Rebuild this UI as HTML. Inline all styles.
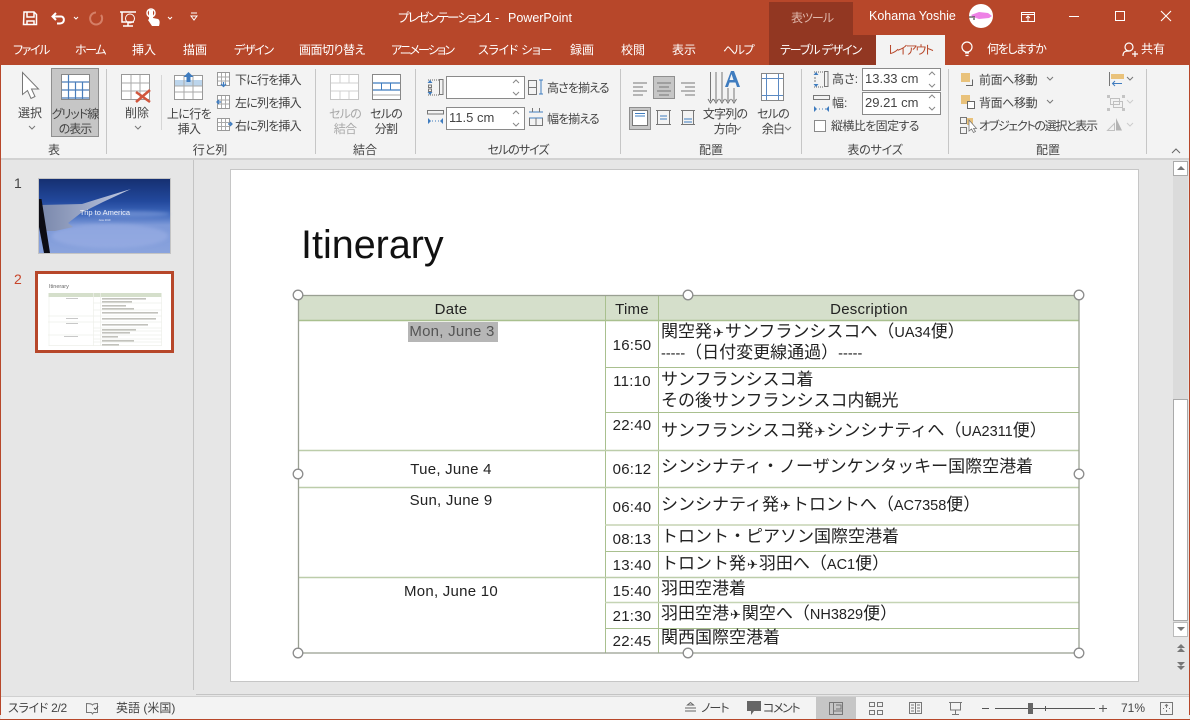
<!DOCTYPE html>
<html lang="ja"><head><meta charset="utf-8"><title>PowerPoint</title>
<style>
*{box-sizing:border-box}
html,body{margin:0;padding:0;background:#fff}
#a{position:relative;width:1190px;height:720px;overflow:hidden;background:#e6e6e6;font-family:"Liberation Sans","Noto Sans CJK JP",sans-serif;font-feature-settings:"palt";color:#333}
#a div{position:absolute}
.t,.c{white-space:nowrap;font-size:12px;line-height:20px;height:20px;color:#444}
.c{transform:translateX(-50%);text-align:center}
.m{line-height:15px;height:32px}
.w{color:#fff}
.g{color:#a8a8a8}
.box{background:#fff;border:1px solid #8a8a8a}
.sep{width:1px;top:69px;height:85px;background:#c6c6c6}
.lt{font-size:15px;letter-spacing:.25px;color:#222;margin-top:2px}
.d{left:661px;font-size:17px;color:#222;font-feature-settings:normal;white-space:nowrap;line-height:20px;height:20px;margin-top:1px}
.d i{font-style:normal;font-size:14.5px;font-family:"Liberation Sans",sans-serif}
.d b{font-weight:normal;font-size:13px;font-family:"DejaVu Sans",sans-serif;margin:0 1px}
svg{position:absolute;left:0;top:0}
</style></head><body><div id="a">
<div style="left:0;top:0;width:1190px;height:65px;background:#b7472a"></div>
<div style="left:769px;top:2px;width:84px;height:33px;background:#923722"></div>
<div style="left:769px;top:35px;width:107px;height:30px;background:#923722"></div>
<div style="left:876px;top:35px;width:69px;height:30px;background:#f3f3f3"></div>
<div style="left:1px;top:65px;width:1188px;height:93px;background:#f3f3f3"></div>
<div style="left:1px;top:158px;width:1188px;height:2px;background:#d2d2d2"></div>
<div style="left:193px;top:160px;width:1px;height:530px;background:#c4c4c4"></div>
<div style="left:196px;top:694px;width:993px;height:1px;background:#c4c4c4"></div>
<div style="left:1px;top:697px;width:1188px;height:22px;background:#f3f3f3"></div>
<div style="left:1px;top:696px;width:1188px;height:1px;background:#d0d0d0"></div>
<div style="left:0;top:60px;width:1px;height:655px;background:#b7472a"></div>
<div style="left:1189px;top:60px;width:1px;height:655px;background:#b7472a"></div>
<div style="left:0;top:719px;width:1190px;height:1px;background:#b7472a"></div>

<!-- title -->
<div class="t w" style="left:398px;top:8px;font-size:12.5px;letter-spacing:-1.6px">プレゼンテーション1</div>
<div class="t w" style="left:495px;top:8px;font-size:12.5px">-</div>
<div class="t w" style="left:508px;top:8px;font-size:12.5px">PowerPoint</div>
<div class="c" style="left:812px;top:8px;color:#e0b8ac;letter-spacing:-1px">表ツール</div>
<div class="t w" style="left:869px;top:6px;font-size:12.5px">Kohama Yoshie</div>

<!-- tabs -->
<div class="t w" style="left:13px;top:40px;letter-spacing:-1.4px">ファイル</div>
<div class="t w" style="left:75px;top:40px;letter-spacing:-1.4px">ホーム</div>
<div class="t w" style="left:132px;top:40px">挿入</div>
<div class="t w" style="left:183px;top:40px">描画</div>
<div class="t w" style="left:234px;top:40px;letter-spacing:-1.3px">デザイン</div>
<div class="t w" style="left:299px;top:40px;letter-spacing:-.5px">画面切り替え</div>
<div class="t w" style="left:391px;top:40px;letter-spacing:-1.8px">アニメーション</div>
<div class="t w" style="left:478px;top:40px;letter-spacing:-.3px">スライド ショー</div>
<div class="t w" style="left:570px;top:40px">録画</div>
<div class="t w" style="left:621px;top:40px">校閲</div>
<div class="t w" style="left:672px;top:40px">表示</div>
<div class="t w" style="left:723px;top:40px;letter-spacing:-1.4px">ヘルプ</div>
<div class="t w" style="left:780px;top:40px;letter-spacing:-1.1px">テーブル デザイン</div>
<div class="t" style="left:888px;top:40px;color:#b7472a;letter-spacing:-1.6px">レイアウト</div>
<div class="t w" style="left:987px;top:39px;letter-spacing:-1.4px">何をしますか</div>
<div class="t w" style="left:1141px;top:39px">共有</div>

<!-- ribbon separators -->
<div class="sep" style="left:106px"></div><div class="sep" style="left:315px"></div><div class="sep" style="left:415px"></div><div class="sep" style="left:620px"></div><div class="sep" style="left:801px"></div><div class="sep" style="left:948px"></div><div class="sep" style="left:1146px"></div>
<div style="left:161px;top:75px;width:1px;height:55px;background:#d6d6d6"></div>

<!-- active bg -->
<div style="left:51px;top:68px;width:48px;height:69px;background:#c6c6c6;border:1px solid #8f8f8f"></div>
<div style="left:653px;top:76px;width:22px;height:23px;background:#c6c6c6;border:1px solid #8f8f8f"></div>
<div style="left:629px;top:107px;width:22px;height:23px;background:#c6c6c6;border:1px solid #8f8f8f"></div>
<!-- inputs -->
<div class="box" style="left:446px;top:76px;width:79px;height:23px"></div>
<div class="box" style="left:446px;top:107px;width:79px;height:23px"></div>
<div class="box" style="left:862px;top:68px;width:79px;height:23px"></div>
<div class="box" style="left:862px;top:92px;width:79px;height:23px"></div>
<div class="box" style="left:814px;top:120px;width:12px;height:12px"></div>
<div class="t" style="left:449px;top:108px;font-size:13px">11.5 cm</div>
<div class="t" style="left:865px;top:69px;font-size:13px">13.33 cm</div>
<div class="t" style="left:865px;top:93px;font-size:13px">29.21 cm</div>

<!-- ribbon text -->
<div class="c" style="left:30px;top:103px">選択</div>
<div class="c m" style="left:75px;top:107px;letter-spacing:-1px">グリッド線<br>の表示</div>
<div class="c" style="left:54px;top:140px">表</div>
<div class="c" style="left:137px;top:103px">削除</div>
<div class="c m" style="left:189px;top:107px;letter-spacing:-.6px">上に行を<br>挿入</div>
<div class="t" style="left:235px;top:70px;letter-spacing:-.8px">下に行を挿入</div>
<div class="t" style="left:235px;top:93px;letter-spacing:-.8px">左に列を挿入</div>
<div class="t" style="left:235px;top:116px;letter-spacing:-.8px">右に列を挿入</div>
<div class="c" style="left:210px;top:140px">行と列</div>
<div class="c g m" style="left:345px;top:107px;letter-spacing:-.8px">セルの<br>結合</div>
<div class="c m" style="left:386px;top:107px;letter-spacing:-.8px">セルの<br>分割</div>
<div class="c" style="left:365px;top:140px">結合</div>
<div class="t" style="left:547px;top:78px;letter-spacing:-.9px">高さを揃える</div>
<div class="t" style="left:547px;top:109px;letter-spacing:-.9px">幅を揃える</div>
<div class="c" style="left:518px;top:140px;letter-spacing:-1px">セルのサイズ</div>
<div class="c m" style="left:725px;top:107px;letter-spacing:-.8px">文字列の<br>方向</div>
<div class="c m" style="left:773px;top:107px;letter-spacing:-.8px">セルの<br>余白</div>
<div class="c" style="left:711px;top:140px">配置</div>
<div class="t" style="left:832px;top:69px">高さ:</div>
<div class="t" style="left:832px;top:93px">幅:</div>
<div class="t" style="left:831px;top:116px;letter-spacing:-.6px">縦横比を固定する</div>
<div class="c" style="left:875px;top:140px;letter-spacing:-.2px">表のサイズ</div>
<div class="t" style="left:979px;top:70px;letter-spacing:-.4px">前面へ移動</div>
<div class="t" style="left:979px;top:93px;letter-spacing:-.4px">背面へ移動</div>
<div class="t" style="left:979px;top:116px;letter-spacing:-1.3px">オブジェクトの選択と表示</div>
<div class="c" style="left:1048px;top:140px">配置</div>

<!-- slide pane -->
<div class="t" style="left:14px;top:173px;font-size:14px;color:#444">1</div>
<div class="t" style="left:14px;top:269px;font-size:14px;color:#c8452a">2</div>
<div style="left:230px;top:169px;width:909px;height:513px;background:#fff;border:1px solid #c6c6c6"></div>
<div style="left:1173px;top:161px;width:15px;height:475px;background:#dbdbdb"></div>
<div style="left:1173px;top:161px;width:15px;height:15px;background:#fff;border:1px solid #aaa"></div>
<div style="left:1173px;top:399px;width:15px;height:222px;background:#fff;border:1px solid #aaa"></div>
<div style="left:1173px;top:622px;width:15px;height:15px;background:#fff;border:1px solid #bbb"></div>

<!-- slide -->
<div class="t" style="left:301px;top:220px;height:50px;line-height:50px;font-size:39.500px;color:#111;font-feature-settings:normal">Itinerary</div>
<div style="left:298px;top:295px;width:781px;height:25px;background:#d5dfcb"></div>
<div style="left:408px;top:322px;width:90px;height:20px;background:#b6b6b6"></div>

<!-- icons and table lines -->
<svg width="1190" height="720" viewBox="0 0 1190 720" fill="none">
<defs><linearGradient id="sky" x1="0" y1="0" x2="0" y2="1"><stop offset="0" stop-color="#152f70"/><stop offset=".3" stop-color="#22489c"/><stop offset=".48" stop-color="#3f69bd"/><stop offset=".62" stop-color="#7d99d8"/><stop offset="1" stop-color="#8aa3dd"/></linearGradient>
<linearGradient id="wing" x1="0" y1="0" x2="1" y2="0"><stop offset="0" stop-color="#7a88ac"/><stop offset="1" stop-color="#bfc9e2"/></linearGradient>
<filter id="bl"><feGaussianBlur stdDeviation="1.500"/></filter></defs>
<!-- qat -->
<g stroke="#fff" stroke-width="1.5">
<path d="M24 12h10l2.500 2.500v10h-13z"/><path d="M27 12v5h7v-5M27 25v-4h7v4" stroke-width="1.500"/>
<path d="M56 13l-3.500 3.500 3.500 3.500M53 16.500h8c4 0 4 7 -1 7h-3" stroke-width="2"/>
<path d="M74 17l2 2 2-2M168 17l2 2 2-2" stroke-width="1"/>
<path d="M120 12h16M122 12v10h12M128 22v4M123 26h10"/>
<circle cx="130" cy="18.500" r="4.500" stroke-width="1"/>
<path d="M191 13h6M191 16h6l-3 4z" stroke-width="1"/>
</g>
<path d="M96 12.500a6 6 0 1 0 5 2.500" stroke="#d57f67" stroke-width="2"/>
<path d="M149 10h4v8l5 1c2 1 2 4 1 7h-7l-4-6 1-1z" fill="#fff"/>
<circle cx="151" cy="13" r="4" stroke="#fff" stroke-width="1.500"/>
<!-- avatar -->
<circle cx="981" cy="16" r="12" fill="#fff"/>
<path d="M971 15l8-3 9 1 4 3-3 2-10 1-6-2z" fill="#ee82e6"/>
<path d="M969 17h6M973 19h2" stroke="#222"/>
<!-- window -->
<g stroke="#fff">
<path d="M1021.500 12.500h13v9h-13zM1021.500 14.500h13M1028 21v-5M1026 18l2-2 2 2"/>
<path d="M1069 16.500h10"/><rect x="1115.500" y="11.500" width="9" height="9"/>
<path d="M1161 11l10 10M1171 11l-10 10" stroke-width="1.100"/>
<circle cx="967" cy="47" r="5" stroke-width="1.200"/>
<path d="M965 53h4M965.500 55.500h3" stroke-width="1.200"/>
<circle cx="1129" cy="47" r="4" stroke-width="1.200"/>
<path d="M1123 56c0-5 3-5 6-5M1132 54h6M1135 51v6" stroke-width="1.200"/>
</g>
<!-- select arrow -->
<path d="M22.500 72.500v22l5-4 3.500 8 4-2-3.500-7.500h7z" fill="#fff" stroke="#777"/>
<g stroke="#777"><path d="M29 126l3 3 3-3M135 126l3 3 3-3M735 127l3 3 3-3M785 127l3 3 3-3M1047 77l3 3 3-3M1047 100l3 3 3-3M1127 77l3 3 3-3"/></g>
<path d="M1127 100l3 3 3-3M1127 123l3 3 3-3" stroke="#ccc"/>
<!-- grid icon -->
<rect x="61.500" y="74.500" width="28" height="25" fill="#fff" stroke="#888"/>
<path d="M68.500 75v24M75.500 82v17M82.500 82v17M62 82h27M62 90h27M62 98h27" stroke="#4a7ebb" stroke-width="1.200"/>
<!-- delete -->
<rect x="121.500" y="74.500" width="28" height="25" fill="#fff" stroke="#999"/>
<path d="M131 75v24M140 75v24M122 83h27M122 91h27" stroke="#aaa"/>
<path d="M136 92l14 10M150 90l-14 12" stroke="#d0573e" stroke-width="2.500"/>
<!-- insert above -->
<rect x="174.500" y="75.500" width="28" height="24" fill="#fff" stroke="#999"/>
<rect x="175" y="80" width="27" height="6" fill="#bcd5ec"/>
<path d="M184 76v23M193 76v23M175 86h27M175 92h27" stroke="#aaa"/>
<path d="M188.500 72l-5 5h3v5h4v-5h3z" fill="#3f7cbf"/>
<!-- small grids -->
<g stroke="#999" fill="#fff">
<rect x="217.500" y="72.500" width="12" height="13"/><rect x="217.500" y="95.500" width="12" height="13"/><rect x="217.500" y="118.500" width="12" height="12"/>
</g>
<path d="M221.500 73v12M225.500 73v12M218 77h11M218 81h11M221.500 96v12M225.500 96v12M218 100h11M218 104h11M221.500 119v11M225.500 119v11M218 122.500h11M218 126.500h11" stroke="#aaa"/>
<path d="M223.500 82v4M221 84l2.500 2.500 2.500-2.500M217 102h4M219 100l-2 2 2 2M228 124h4M230 122l2 2-2 2" stroke="#3f7cbf" stroke-width="1.300"/>
<!-- merge -->
<rect x="330.500" y="74.500" width="28" height="25" fill="#fff" stroke="#c6c6c6"/>
<path d="M340 75v8M349 75v8M340 91v8M349 91v8M331 83h27M331 91h27" stroke="#d0d0d0"/>
<rect x="372.500" y="74.500" width="28" height="25" fill="#fff" stroke="#888"/>
<path d="M373 83h27M373 90h27" stroke="#3f7cbf" stroke-width="1.300"/>
<path d="M381.500 83v7M390.500 83v7" stroke="#3f7cbf"/>
<path d="M373 95h27" stroke="#aaa"/>
<!-- cell size icons -->
<path d="M428 80h11M428 95h11" stroke="#666" stroke-dasharray="1 1"/>
<rect x="439.500" y="79.500" width="3.500" height="15" stroke="#777"/>
<rect x="428.500" y="85" width="3" height="2.500" stroke="#777"/><rect x="428.500" y="89" width="3" height="2.500" stroke="#777"/>
<path d="M430 80l-2.500 3h5zM430 95l-2.500-3h5z" fill="#3f7cbf"/>
<rect x="427.500" y="110.500" width="16" height="3.500" stroke="#777"/>
<path d="M428 118l3 3-3 3zM443 118l-3 3 3 3z" fill="#3f7cbf"/><path d="M432 121h1M435 121h1M438 121h1" stroke="#3f7cbf"/>
<path d="M528.500 80.500h8v14h-8zM528.500 87.500h8" stroke="#777"/>
<path d="M539 80h4M539 94h4M541 80v14" stroke="#3f7cbf"/>
<path d="M529 112h14M529 118h14" stroke="#3f7cbf"/>
<path d="M532.500 108v4M539.500 108v4M529.500 118v7.500h13V118M536 118v7" stroke="#777"/>
<!-- spinners -->
<g stroke="#888"><path d="M513 83l3-3 3 3M513 92l3 3 3-3M513 114l3-3 3 3M513 123l3 3 3-3M929 75l3-3 3 3M929 84l3 3 3-3M929 98l3-3 3 3M929 107l3 3 3-3"/></g>
<!-- align -->
<g stroke="#777"><path d="M633 83h14M633 87h10M633 91h14M633 95h10M657 83h14M659 87h10M657 91h14M659 95h10M681 83h14M685 87h10M681 91h14M685 95h10"/>
<rect x="632.500" y="110.500" width="15" height="15" fill="#fff"/><path d="M656 110.500h15M656 124.500h15M657.500 110v15M669.500 110v15M681 110.500h14M681 124.500h14M682.500 110v15M693.500 110v15"/></g>
<path d="M635 113.500h10M635 116h10M660 116h7M660 119h7M684 119h8M684 122h8" stroke="#3f7cbf"/>
<!-- text dir -->
<path d="M710.500 72v29M716 72v29M722 72v29M728 88v13M734 88v13" stroke="#777"/>
<path d="M708 99l2.500 4 2.500-4M713.500 99l2.500 4 2.500-4M719.500 99l2.500 4 2.500-4M725.500 99l2.500 4 2.500-4M731.500 99l2.500 4 2.500-4" stroke="#777"/>
<path d="M725 87l6-16h3l6 16h-3l-1.500-4.500h-6L728 87zM729.500 80h4l-2-6z" fill="#3f7cbf"/>
<!-- margins -->
<rect x="761.500" y="73.500" width="22" height="27" fill="#fff" stroke="#888"/>
<path d="M766.500 74v26M778.500 74v26M762 78.500h21M762 95.500h21" stroke="#5b8ac3"/>
<!-- table size icons -->
<path d="M814 72h10M814 87h10" stroke="#666" stroke-dasharray="1 1"/>
<rect x="824.500" y="71.500" width="3.500" height="15" stroke="#777"/>
<path d="M816 72l-2.500 3h5zM816 87l-2.500-3h5z" fill="#3f7cbf"/>
<path d="M815 77v5" stroke="#777" stroke-dasharray="2 1"/>
<rect x="813.500" y="95.500" width="16" height="4" stroke="#777"/>
<path d="M814 106l3 3-3 3zM829 106l-3 3 3 3z" fill="#3f7cbf"/><path d="M819 109h1M822 109h1M825 109h1" stroke="#3f7cbf"/>
<!-- arrange -->
<rect x="961" y="73" width="9" height="9" fill="#e9c27b"/>
<path d="M966 85.500h6.500v-6" stroke="#666"/>
<rect x="961" y="95" width="9" height="9" fill="#e9c27b"/>
<rect x="967.500" y="101.500" width="7" height="7" fill="#fff" stroke="#666"/>
<rect x="960.500" y="117.500" width="6" height="6" stroke="#777"/><rect x="960.500" y="127.500" width="6" height="6" stroke="#777"/>
<rect x="967" y="118" width="6" height="7" fill="#e9c27b"/>
<path d="M969 120v11l2.500-2 2 3.500 2-1-2-3h3z" fill="#fff" stroke="#777" stroke-width=".8"/>
<path d="M1109.500 72v14" stroke="#777"/><rect x="1111" y="74" width="13" height="5" fill="#e9c27b"/><path d="M1122 83.500h-9M1115 81l-2.500 2.500 2.500 2.500" stroke="#3f7cbf"/>
<rect x="1110.500" y="98.500" width="9" height="6" stroke="#c0c0c0"/><rect x="1113.500" y="101.500" width="9" height="6" stroke="#c0c0c0"/>
<path d="M1107 95h3v3h-3zM1122 95h3v3h-3zM1107 108h3v3h-3zM1122 108h3v3h-3z" fill="#c4c4c4"/>
<path d="M1107.500 130.500l7-7v7z" fill="#f3f3f3" stroke="#c0c0c0"/><path d="M1116 118l6 12.500h-6z" fill="#b4b4b4"/>
<path d="M1172 153l4-4 4 4" stroke="#666"/>
<!-- thumb1 -->
<rect x="38.500" y="178.500" width="132" height="75" fill="url(#sky)" stroke="#c4c4c4"/>
<g filter="url(#bl)"><ellipse cx="110" cy="236" rx="58" ry="12" fill="#9db1e6" opacity=".55"/><ellipse cx="130" cy="214" rx="40" ry="3" fill="#8fa8e0" opacity=".5"/></g>
<path d="M41 205l41-1 16-5 33-10-28 13-22 11-13 10 5 4-18 4h-12z" fill="url(#wing)"/>
<path d="M39 199h2.500l8.500 54h-6l-5-26z" fill="#0c0c14"/>
<text x="105" y="215" font-size="7.500" fill="#eef1fa" text-anchor="middle" font-family="Liberation Sans">Trip to America</text>
<text x="104.500" y="221" font-size="2.500" fill="#e8ecf8" text-anchor="middle" font-family="Liberation Sans">June 2019</text>
<!-- thumb2 -->
<rect x="36.500" y="272.500" width="136" height="79" fill="#fff" stroke="#b7472a" stroke-width="3"/>
<text x="49" y="288" font-size="5.500" fill="#666" font-family="Liberation Sans">Itinerary</text>
<rect x="48.500" y="293" width="113" height="4" fill="#d5dfcb"/>
<path d="M48.500 345.500h113M49 297v49M161.500 297v49M93.500 293v53M100.500 293v53M93 303h69M93 310h69M48 316h114M48 322h114M93 328h69M93 331h69M48 335h114M93 339h69M93 342h69" stroke="#eef0ea" stroke-width=".7"/>
<g fill="#c2c2bc"><rect x="102" y="298" width="44" height="1.600"/><rect x="102" y="301" width="30" height="1.600"/><rect x="102" y="305" width="24" height="1.600"/><rect x="102" y="308" width="32" height="1.600"/><rect x="102" y="312" width="56" height="1.600"/><rect x="102" y="318" width="54" height="1.600"/><rect x="102" y="324" width="46" height="1.600"/><rect x="102" y="329" width="34" height="1.600"/><rect x="102" y="332" width="28" height="1.600"/><rect x="102" y="336" width="16" height="1.600"/><rect x="102" y="340" width="32" height="1.600"/><rect x="102" y="344" width="17" height="1.600"/></g>
<g fill="#c8c8c8"><rect x="66" y="298" width="12" height="1"/><rect x="66" y="318" width="12" height="1"/><rect x="66" y="323" width="12" height="1"/><rect x="64" y="336" width="14" height="1"/></g>
<!-- scrollbar glyphs -->
<g fill="#777"><path d="M1181 166l-4 4h8zM1181 631l-4-4h8zM1181 644l-4 4h8zM1181 648l-4 4h8zM1181 666l-4-4h8zM1181 670l-4-4h8z"/></g>
<!-- table -->
<g stroke="#a9c08f">
<path d="M605.500 295v358M658.500 295v358"/>
<path d="M298 320.500h781" stroke-width="1.500"/>
<path d="M605 367.500h474M605 412.500h474M605 551.500h474M605 628.500h474"/>
<path d="M605 525h474M605 602.500h474" stroke="#c5d4b4" stroke-width="1.500"/>
<path d="M298 450.500h781M298 487.500h781M298 577.500h781" stroke="#bccdaa" stroke-width="1.500"/>
</g>
<rect x="298.500" y="295.500" width="780.500" height="357.500" stroke="#9aa093" stroke-width="1.300"/>
<g fill="#fff" stroke="#8c8c8c" stroke-width="1.300">
<circle cx="298" cy="295" r="4.800"/><circle cx="688" cy="295" r="4.800"/><circle cx="1079" cy="295" r="4.800"/><circle cx="298" cy="474" r="4.800"/><circle cx="1079" cy="474" r="4.800"/><circle cx="298" cy="653" r="4.800"/><circle cx="688" cy="653" r="4.800"/><circle cx="1079" cy="653" r="4.800"/>
</g>
<!-- status icons -->
<path d="M86.500 703.500c3 0 5 0 6 1.500 1-1.500 3-1.500 5-1.500v9h-4l-1 1.500-1-1.500h-5z" stroke="#777"/>
<path d="M94 708l1.500 1.500 2.500-3.500" stroke="#555"/>
<path d="M685 711h11M685 708h11M687 705h7M690.500 702.500l-3 2.500h6z" stroke="#666"/>
<path d="M747 701h14v10h-7l-3 4v-4h-4z" fill="#666"/>
<rect x="816" y="697" width="40" height="22" fill="#c6c6c6"/>
<path d="M829.500 702.500h13v12h-13zM833.500 703v11M836 705h5v4h-5M834 711h8" stroke="#777"/>
<path d="M869.500 702.500h5v4h-5zM877.500 702.500h5v4h-5zM869.500 710.500h5v4h-5zM877.500 710.500h5v4h-5z" stroke="#777"/>
<path d="M909.500 702.500h12v11h-12zM915.500 703v11M911 705h3M911 708h3M911 711h3M917 705h3M917 708h3M917 711h3" stroke="#777"/>
<path d="M949 702.500h13M950.500 703v7h10v-7M955.500 710v4M952 714.500h7" stroke="#777"/>
<path d="M982 708.500h7M995 708.500h100M1099 708.500h8M1103 705v7M1045.500 706v5" stroke="#555"/>
<rect x="1028" y="703" width="5" height="11" fill="#666"/>
<path d="M1160.500 702.500h12v12h-12z" stroke="#777"/>
<path d="M1166.500 705v3M1165 706l1.500-1.500 1.500 1.500M1166.500 712v-2M1163 708.500h1M1169 708.500h1" stroke="#777"/>
</svg>

<!-- table text -->
<div class="c lt" style="left:451px;top:298px">Date</div>
<div class="c lt" style="left:632px;top:298px">Time</div>
<div class="c lt" style="left:869px;top:298px">Description</div>
<div class="c lt" style="left:452px;top:320px;color:#555">Mon, June 3</div>
<div class="c lt" style="left:451px;top:458px">Tue, June 4</div>
<div class="c lt" style="left:451px;top:489px">Sun, June 9</div>
<div class="c lt" style="left:451px;top:580px">Mon, June 10</div>
<div class="c lt" style="left:632px;top:334px">16:50</div>
<div class="c lt" style="left:632px;top:370px">11:10</div>
<div class="c lt" style="left:632px;top:414px">22:40</div>
<div class="c lt" style="left:632px;top:458px">06:12</div>
<div class="c lt" style="left:632px;top:496px">06:40</div>
<div class="c lt" style="left:632px;top:528px">08:13</div>
<div class="c lt" style="left:632px;top:554px">13:40</div>
<div class="c lt" style="left:632px;top:580px">15:40</div>
<div class="c lt" style="left:632px;top:605px">21:30</div>
<div class="c lt" style="left:632px;top:630px">22:45</div>
<div class="d" style="top:321px">関空発<b>✈</b>サンフランシスコへ（<i>UA34</i>便）</div>
<div class="d" style="top:342px"><i>-----</i>（日付変更線通過）<i>-----</i></div>
<div class="d" style="top:369px">サンフランシスコ着</div>
<div class="d" style="top:390px">その後サンフランシスコ内観光</div>
<div class="d" style="top:420px">サンフランシスコ発<b>✈</b>シンシナティへ（<i>UA2311</i>便）</div>
<div class="d" style="top:456px">シンシナティ・ノーザンケンタッキー国際空港着</div>
<div class="d" style="top:494px">シンシナティ発<b>✈</b>トロントへ（<i>AC7358</i>便）</div>
<div class="d" style="top:526px">トロント・ピアソン国際空港着</div>
<div class="d" style="top:553px">トロント発<b>✈</b>羽田へ（<i>AC1</i>便）</div>
<div class="d" style="top:578px">羽田空港着</div>
<div class="d" style="top:603px">羽田空港<b>✈</b>関空へ（<i>NH3829</i>便）</div>
<div class="d" style="top:627px">関西国際空港着</div>

<!-- status text -->
<div class="t" style="left:8px;top:698px;letter-spacing:-.3px">スライド 2/2</div>
<div class="t" style="left:116px;top:698px">英語 (米国)</div>
<div class="t" style="left:701px;top:698px;letter-spacing:-1px">ノート</div>
<div class="t" style="left:763px;top:698px;letter-spacing:-1.4px">コメント</div>
<div class="t" style="left:1121px;top:698px">71%</div>
</div></body></html>
